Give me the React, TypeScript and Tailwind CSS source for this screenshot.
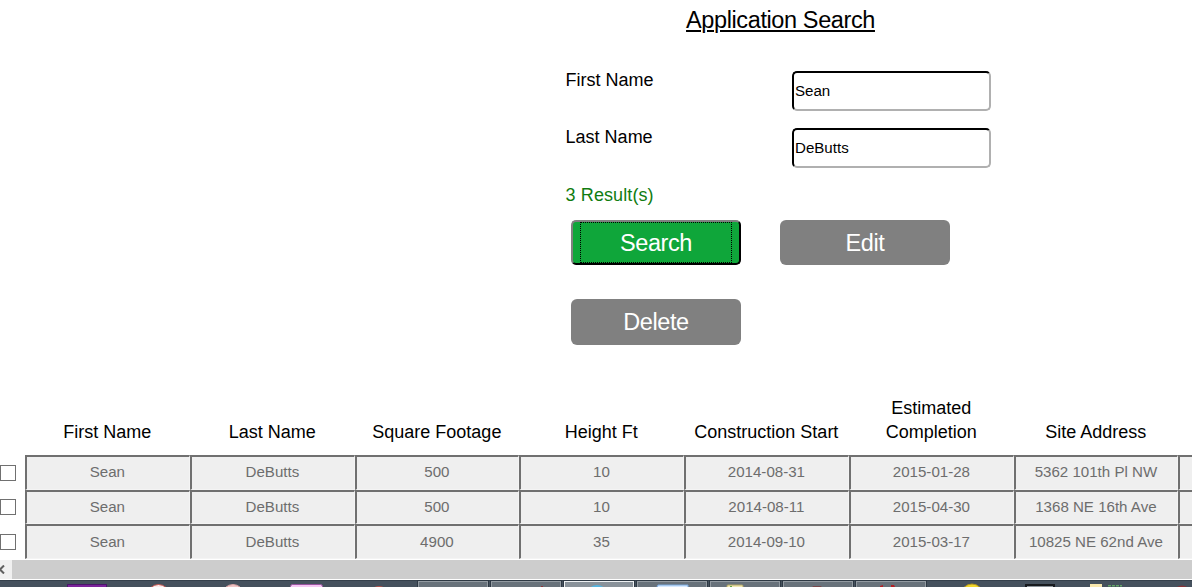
import type { ReactNode } from 'react';

const columns: ReactNode[] = [
  'First Name',
  'Last Name',
  'Square Footage',
  'Height Ft',
  'Construction Start',
  <>Estimated<br />Completion</>,
  'Site Address',
  '',
];

const rows = [
  { checkbox: 'pt-[10px]', text: 'pt-1.5', cells: ['Sean', 'DeButts', '500', '10', '2014-08-31', '2015-01-28', '5362 101th Pl NW', ''] },
  { checkbox: 'pt-[9px]', text: 'pt-1.5', cells: ['Sean', 'DeButts', '500', '10', '2014-08-11', '2015-04-30', '1368 NE 16th Ave', ''] },
  { checkbox: 'pt-[10px]', text: 'pt-[7px]', cells: ['Sean', 'DeButts', '4900', '35', '2014-09-10', '2015-03-17', '10825 NE 62nd Ave', ''] },
];

const gridColumns = 'grid grid-cols-[25px_165px_165px_164px_165px_165px_165px_164px_165px]';

function Field({ label, value }: { label: string; value: string }) {
  return (
    <div className="flex h-[57px]">
      <label className="w-[227px] pl-[0.6px] text-[18px] leading-[18px]">{label}</label>
      <input
        readOnly
        value={value}
        className="h-10 w-[199px] rounded-[5px] border-2 border-t-black border-r-[#b0b0b0] border-b-[#b0b0b0] border-l-black bg-white pb-[2px] pl-px text-[15.1px] outline-none"
      />
    </div>
  );
}

function TaskSlot({ kind = 'plain', children }: { kind?: 'plain' | 'open' | 'active'; children?: ReactNode }) {
  const frame = {
    plain: '',
    open: 'border border-b-0 border-[#929aa1] bg-[#68727b] outline outline-1 outline-[#2e3944]',
    active: 'border border-b-0 border-[#eef1f3] bg-[#89929a] outline outline-1 outline-[#2e3944]',
  }[kind];
  return (
    <div className={'mt-px flex h-[7px] w-[70px] shrink-0 overflow-hidden ' + frame}>
      <svg className="h-[7px] w-[70px] shrink-0" viewBox="0 0 70 7">{children}</svg>
    </div>
  );
}

export default function App() {
  return (
    <div
      className="flex h-[587px] w-[1192px] flex-col overflow-hidden bg-white text-black"
      style={{ fontFamily: '"Liberation Sans", Arial, sans-serif' }}
    >
      <main className="flex h-[396px] shrink-0 flex-col pl-[565px]">
        <h1 className="h-[71px] w-[431px] pt-[7px] text-center text-[23.5px] leading-[26px] tracking-[-0.39px] underline decoration-2 underline-offset-2">
          Application Search
        </h1>
        <form className="flex flex-col">
          <Field label="First Name" value="Sean" />
          <Field label="Last Name" value="DeButts" />
          <p className="h-[35px] pl-[0.6px] text-[18px] leading-[20px] tracking-[0.1px] text-[#107c10]">3 Result(s)</p>
          <div className="grid grid-cols-[170px_170px] gap-x-[39px] gap-y-[34px] pl-1.5 text-[23.5px] tracking-[-0.4px] text-white">
            <button
              type="button"
              className="flex h-[45px] justify-center rounded-[5px] border-2 border-t-[#808080] border-r-black border-b-black border-l-[#808080] bg-[#0fa63a]"
            >
              <span className="flex h-[41px] w-[152px] items-center justify-center border border-dotted border-black pt-[2px]">Search</span>
            </button>
            <button type="button" className="h-[45px] rounded-[6px] bg-[#808080] pt-[2px]">Edit</button>
            <button type="button" className="h-[46px] rounded-[6px] bg-[#808080] pt-px">Delete</button>
          </div>
        </form>
      </main>

      <section className="h-[163px] w-[1192px] shrink-0 overflow-hidden">
        <div className={gridColumns + ' h-[59px] items-end pb-[11px] text-center text-[18px] leading-6'}>
          <div />
          {columns.map((name, i) => (
            <div key={i} className="pr-[0.3px] whitespace-nowrap">{name}</div>
          ))}
        </div>
        <div className="grid grid-rows-[35px_34px_35px]">
          {rows.map((row, i) => (
            <div key={i} className={gridColumns}>
              <div className={'flex ' + row.checkbox}>
                <input
                  type="checkbox"
                  className="size-4 appearance-none border border-[#707070] bg-white"
                />
              </div>
              {row.cells.map((value, j) => (
                <div
                  key={j}
                  className={
                    'border-t-2 border-r border-b border-l-2 border-t-[#707070] border-r-[#f4f4f4] border-b-[#f4f4f4] border-l-[#707070] bg-[#efefef] pr-[1.2px] text-center text-[15.1px] leading-[18px] whitespace-nowrap text-[#6d6d6d] ' +
                    row.text
                  }
                >
                  {value}
                </div>
              ))}
            </div>
          ))}
        </div>
      </section>

      <div className="flex h-[21px] shrink-0 border-y border-white bg-[#cdcdcd]">
        <div className="flex w-3 items-center bg-[#f0f0f0]">
          <svg width="5" height="9" viewBox="0 0 5 9">
            <path d="M4 0.5 0 4.5 4 8.5" fill="none" stroke="#606060" strokeWidth="2" />
          </svg>
        </div>
      </div>

      <footer className="flex h-[7px] shrink-0 gap-[3px] overflow-hidden bg-[#45515d] pl-[53px] shadow-[inset_0_1px_0_#35404b]">
        <TaskSlot><rect x="14.5" y="3.5" width="39" height="8" fill="#7b239b" stroke="#4b176b" /></TaskSlot>
        <TaskSlot><circle cx="32.5" cy="14.5" r="11" fill="#fbeaea" stroke="#c8574f" /></TaskSlot>
        <TaskSlot><circle cx="34" cy="14.5" r="11" fill="#f2c6c6" stroke="#d9a3a3" /></TaskSlot>
        <TaskSlot><rect x="18.5" y="3.5" width="32" height="8" rx="2" fill="#f5c5f3" stroke="#97549e" /></TaskSlot>
        <TaskSlot><circle cx="34" cy="15" r="10" fill="#b7544d" /></TaskSlot>
        <TaskSlot kind="open" />
        <TaskSlot kind="open"><path d="M49 7V4h2v3z" fill="#8d3338" /></TaskSlot>
        <TaskSlot kind="active"><circle cx="32" cy="14" r="11" fill="#55b4df" /></TaskSlot>
        <TaskSlot kind="open"><path d="M18 7l2-4h30v4z" fill="#d5e8ff" stroke="#79a9df" /></TaskSlot>
        <TaskSlot kind="open">
          <rect x="16" y="3" width="16" height="5" rx="1" fill="#f0e7b1" stroke="#b1a565" />
          <path d="M19 4h2v2h-2z" fill="#61a846" />
        </TaskSlot>
        <TaskSlot kind="open"><path d="M27 7l2-3h8l2 3z" fill="#79484c" /></TaskSlot>
        <TaskSlot kind="open"><path d="M23 7V4l3-1v4zM34 7V3h3l2 4z" fill="#b41f24" /></TaskSlot>
        <TaskSlot><circle cx="43" cy="14" r="11" fill="#f1d72b" stroke="#b49620" /></TaskSlot>
        <TaskSlot><path d="M24 8V4h28v4" fill="#8c949b" stroke="#171a1e" strokeWidth="2" /></TaskSlot>
        <TaskSlot>
          <rect x="15" y="3" width="12" height="5" fill="#f9e8ae" />
          <path d="M33 4.5h14M33 6h14" stroke="#62a367" strokeDasharray="3 1" />
        </TaskSlot>
        <TaskSlot><circle cx="34" cy="14" r="9.5" fill="#873438" /></TaskSlot>
      </footer>
    </div>
  );
}
